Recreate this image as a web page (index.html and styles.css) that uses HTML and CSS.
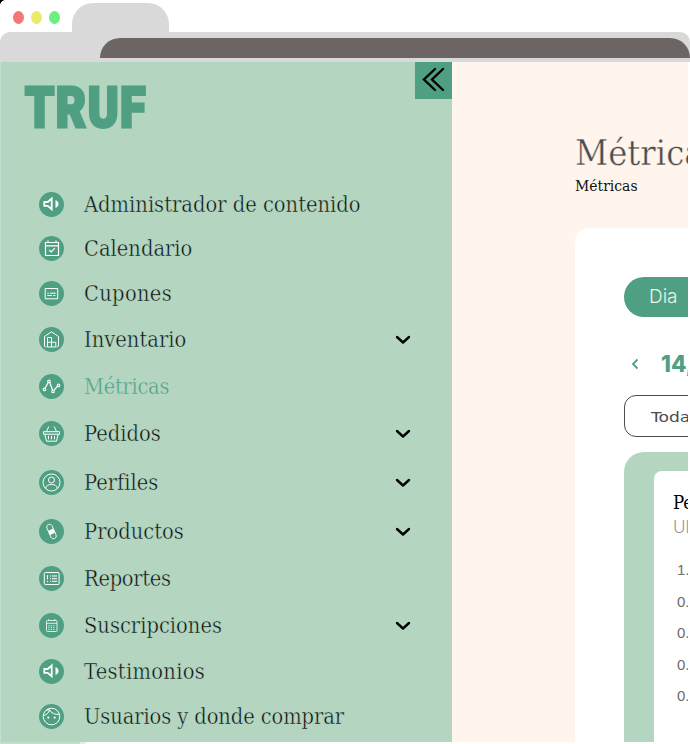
FILE: index.html
```html
<!DOCTYPE html>
<html lang="es">
<head>
<meta charset="utf-8">
<title>Truf</title>
<link rel="stylesheet" href="styles.css">
</head>
<body>
<div class="browser">
  <header class="tabs">
    <span class="corner"></span>
    <i class="dot red"></i><i class="dot yellow"></i><i class="dot green"></i>
    <div class="tab"></div>
  </header>
  <div class="toolbar"><div class="address"></div></div>
  <div class="page">
    <aside class="sidebar">
      <div class="brand-row">
        <div class="brand">TRUF</div>
        <button class="collapse" aria-label="Contraer"><svg viewBox="0 0 37 37"><path d="M20 7 9 17.500 20 28M28 7 17 17.500 28 28"/></svg></button>
      </div>
      <nav class="menu">
        <a class="item"><svg class="icon" viewBox="0 0 25 25"><circle cx="12.5" cy="12.5" r="12.5"/><path class="bold" d="M5.300 10h3.400l4-3.500v10.800l-4-3.500H5.300z"/><path class="fill" d="M16.500 8c4 1.500 4 6.600 0 8z"/></svg><span class="label">Administrador de contenido</span></a>
        <a class="item"><svg class="icon" viewBox="0 0 25 25"><circle cx="12.5" cy="12.5" r="12.5"/><path class="mid" d="M6.500 6.500h13v13h-13zM6.500 9.800h13M9 4.500v2M17 4.500v2M10.200 14l2 2 3.600-3.800"/></svg><span class="label">Calendario</span></a>
        <a class="item"><svg class="icon" viewBox="0 0 25 25"><circle cx="12.5" cy="12.5" r="12.5"/><path d="M6.200 7.500h12.500v10.300H6.200zM8.300 12.200h1.500M11 12.200h5.700M8.300 14.500h4.500M14.300 14.500h2"/></svg><span class="label wide">Cupones</span></a>
        <a class="item"><svg class="icon" viewBox="0 0 25 25"><circle cx="12.5" cy="12.5" r="12.5"/><path d="M7.500 20H6.500l-1-1V9.500l7-4.700 7 4.700V19l-1 1h-1M8.500 20v-9.500h4V20M8.500 15.200h8.300V20H8.500"/></svg><span class="label">Inventario</span><svg class="chevron" viewBox="0 0 16 10"><path d="M2 2l6 5.500L14 2"/></svg></a>
        <a class="item active"><svg class="icon" viewBox="0 0 25 25"><circle cx="12.5" cy="12.5" r="12.5"/><path class="mid" d="M6 14.300 9.200 8.500M10.700 8.500l3 8M14.800 16.400l3.800-4.200"/><g class="nodes"><circle cx="5.500" cy="15.400" r="1.300"/><circle cx="10" cy="7.300" r="1.300"/><circle cx="14" cy="17.500" r="1.300"/><circle cx="19.500" cy="11.400" r="1.300"/></g></svg><span class="label tight">Métricas</span></a>
        <a class="item"><svg class="icon" viewBox="0 0 25 25"><circle cx="12.5" cy="12.5" r="12.5"/><path d="M4.500 10.700h16v2.500h-16zM5.800 13.200l1.700 7h10l1.700-7M7.500 10.500l2.300-5M17.500 10.500l-2.300-5M9.500 14.800v3.500M12.500 14.800v3.500M15.500 14.800v3.500"/></svg><span class="label">Pedidos</span><svg class="chevron" viewBox="0 0 16 10"><path d="M2 2l6 5.500L14 2"/></svg></a>
        <a class="item"><svg class="icon" viewBox="0 0 25 25"><circle cx="12.5" cy="12.5" r="12.5"/><circle class="line" cx="12.500" cy="12.500" r="8.500"/><circle class="line" cx="12.500" cy="10" r="3"/><path d="M6.600 18.500c0-5.400 11.800-5.400 11.800 0"/></svg><span class="label">Perfiles</span><svg class="chevron" viewBox="0 0 16 10"><path d="M2 2l6 5.500L14 2"/></svg></a>
        <a class="item"><svg class="icon" viewBox="0 0 25 25"><circle cx="12.5" cy="12.5" r="12.5"/><g class="faint" transform="rotate(-24 12.5 12.5)"><rect class="line" x="9.700" y="4.800" width="5.600" height="15.400" rx="2.800"/><path class="fill" d="M9.700 10.500h5.600v4.500H9.700z"/></g></svg><span class="label">Productos</span><svg class="chevron" viewBox="0 0 16 10"><path d="M2 2l6 5.500L14 2"/></svg></a>
        <a class="item"><svg class="icon" viewBox="0 0 25 25"><circle cx="12.5" cy="12.5" r="12.5"/><rect class="line" x="5.300" y="6.500" width="14.800" height="12" rx="1"/><path d="M8.500 9.200v4.300M8.500 15v1.200M11 10h1M13 10h5M11 12.700h1M13 12.700h5M11 15.300h1M13 15.300h5"/></svg><span class="label tight">Reportes</span></a>
        <a class="item"><svg class="icon" viewBox="0 0 25 25"><circle cx="12.5" cy="12.5" r="12.5"/><g class="faint"><rect class="line" x="7.500" y="7.500" width="10.500" height="11" rx="1"/><path d="M7.500 10.300H18M9.700 6v1.500M15.700 6v1.500"/><path class="grid" d="M9.300 12.800h7.200M9.300 14.700h7.200M9.300 16.600h7.200"/></g></svg><span class="label">Suscripciones</span><svg class="chevron" viewBox="0 0 16 10"><path d="M2 2l6 5.500L14 2"/></svg></a>
        <a class="item"><svg class="icon" viewBox="0 0 25 25"><circle cx="12.5" cy="12.5" r="12.5"/><path class="bold" d="M5.300 10h3.400l4-3.500v10.800l-4-3.500H5.300z"/><path class="fill" d="M16.500 8c4 1.500 4 6.600 0 8z"/></svg><span class="label wide">Testimonios</span></a>
        <a class="item"><svg class="icon" viewBox="0 0 25 25"><circle cx="12.5" cy="12.5" r="12.5"/><circle class="line" cx="12.500" cy="12.500" r="8.300"/><path d="M4.500 11.500c3-.6 5-2.200 6-5.700 1.500 3.300 5.500 5 9.800 4.500M7 6.500c2-1 3-1 4 0"/><circle class="fill" cx="9.300" cy="13.600" r="1.100"/><circle class="fill" cx="15.700" cy="13.600" r="1.100"/></svg><span class="label narrow">Usuarios y donde comprar</span></a>
      </nav>
    </aside>
    <main class="content">
      <h1>Métricas</h1>
      <p class="crumb">Métricas</p>
      <section class="card">
        <div class="pill">Dia</div>
        <div class="date"><svg class="prev" viewBox="0 0 8 12"><path d="M6.500 1.500 2 6l4.500 4.500"/></svg><span>14,</span></div>
        <div class="select"><span>Todas</span></div>
        <div class="panel">
          <div class="chart">
            <h2>Pedidos</h2>
            <p class="sub">Ultimos</p>
            <ul class="axis"><li>1.0</li><li>0.8</li><li>0.6</li><li>0.4</li><li>0.2</li></ul>
          </div>
        </div>
      </section>
    </main>
  </div>
  <div class="edge"></div>
</div>
</body>
</html>
```

FILE: styles.css
```css
* { box-sizing: border-box; margin: 0; padding: 0; }
body { width: 690px; height: 744px; overflow: hidden; background: #fff; font-family: "DejaVu Serif", serif; }
.browser { position: relative; }
.tabs { height: 32px; display: flex; padding-left: 13px; }
.corner { position: absolute; left: 0; top: 0; width: 5px; height: 5px; background: radial-gradient(circle at 5px 5px, transparent 4.5px, #000 5px); }
.dot { width: 11px; height: 13px; border-radius: 50%; margin: 11px 7px 0 0; flex: none; }
.red { background: #f37777; }
.yellow { background: #e9eb69; }
.green { background: #6cf083; }
.tab { width: 97px; height: 29px; margin: 3px 0 0 5px; background: #d9d9d9; border-radius: 21px 21px 0 0; }
.toolbar { height: 30px; padding: 6px 0 0 100px; background: #d9d9d9; border-radius: 10px 10px 0 0; }
.address { height: 20px; background: #6d6464; border-radius: 20px 20px 0 0; }
.page { display: flex; width: 688px; height: 680px; overflow: hidden; }
.sidebar { flex: none; width: 452px; background: #b4d6c1; border-left: 1px solid #c3dece; }
.brand-row { display: flex; justify-content: space-between; height: 130px; padding-left: 24px; }
.brand { height: 60px; margin-top: 15px; font: 900 56px/62px Roboto, sans-serif; color: #4f9f82; -webkit-text-stroke: 3px #4f9f82; stroke-linejoin: round; letter-spacing: 1.800px; transform: scaleX(.83); transform-origin: left; }
.collapse { width: 37px; height: 37px; border: 0; background: #4f9f82; }
.collapse svg { display: block; width: 37px; height: 37px; fill: none; stroke: #000; stroke-width: 2.4; stroke-linecap: round; }
.menu { display: flex; flex-direction: column; }
.item { display: flex; align-items: center; height: 25px; padding: 0 41px 0 38px; color: #0c1210; }
.item + .item { margin-top: 22px; }
.item:nth-child(2) { margin-top: 19px; }
.item:nth-child(3), .item:nth-child(12) { margin-top: 20px; }
.item:nth-child(4), .item:nth-child(11) { margin-top: 21px; }
.item:nth-child(7), .item:nth-child(8) { margin-top: 24px; }
.icon { flex: none; width: 25px; height: 25px; margin-right: 20px; fill: none; stroke: #fff; stroke-width: 1; }
.icon > circle:first-child { fill: #4f9f82; stroke: none; }
.icon .bold { stroke-width: 1.8; }
.icon .mid { stroke-width: 1.2; }
.icon .fill { fill: #fff; stroke: none; }
.icon .nodes { stroke-width: 1.1; }
.icon .faint { stroke-width: .8; }
.icon .grid { stroke-dasharray: 1.4 1; }
.label { font: 21.700px/25px "DejaVu Serif Condensed", "DejaVu Serif", serif; font-stretch: condensed; white-space: nowrap; -webkit-text-stroke: .42px #b4d6c1; }
.wide { letter-spacing: .3px; }
.narrow { letter-spacing: -.1px; }
.tight { letter-spacing: -.3px; }
.active { color: #4f9f82; }
.chevron { width: 16px; height: 10px; margin-left: auto; fill: none; stroke: #000; stroke-width: 2.4; stroke-linecap: round; stroke-linejoin: round; }
.content { flex: none; width: 360px; padding: 69px 0 0 123px; background: #fff5ec; }
h1 { font: 36px/44px "DejaVu Serif Condensed", "DejaVu Serif", serif; font-stretch: condensed; color: #4c4c4c; -webkit-text-stroke: .4px #fff5ec; }
.crumb { font: 15.500px/20px "DejaVu Serif Condensed", "DejaVu Serif", serif; font-stretch: condensed; margin-top: 1px; color: #111; }
.card { margin-top: 32px; height: 540px; padding: 49px 0 0 49px; background: #fff; border-radius: 14px 0 0; }
.pill { width: 120px; height: 40px; padding-left: 25px; border-radius: 20px; background: #4f9f82; color: #e9f5ee; font: 300 19px/40px Inter, sans-serif; }
.date { display: flex; align-items: center; height: 24px; margin-top: 35px; padding-left: 7px; color: #4f9f82; font: 800 22.500px/24px Inter, sans-serif; }
.prev { width: 8px; height: 12px; margin-right: 22px; fill: none; stroke: #4f9f82; stroke-width: 1.8; }
.select { width: 160px; height: 42px; margin-top: 19px; padding-left: 26px; border: 1.5px solid #4c4c4c; border-radius: 12px; color: #4c4c4c; font: 14.500px/43px "DejaVu Sans", sans-serif; }
.select span { display: inline-block; transform: scaleX(1.18); transform-origin: left; }
.panel { height: 400px; margin-top: 15px; padding: 19px 0 0 30px; background: #b4d6c1; border-radius: 20px 0 0; }
.chart { height: 400px; padding: 21px 0 0 19px; background: #fff; border-radius: 8px 0 0; }
h2 { font: 18.500px/22px "DejaVu Serif Condensed", "DejaVu Serif", serif; font-stretch: condensed; color: #000; }
.sub { font: 300 17px/24px Inter, sans-serif; color: #999; margin-top: 1px; }
.axis { list-style: none; margin-top: 15px; padding-left: 4px; color: #6c6c6c; font: 15px/31.500px "Liberation Sans", sans-serif; }
.edge { width: 86px; height: 2px; background: linear-gradient(to right, #c3dece 80px, #e1efe6 80px); }
```
